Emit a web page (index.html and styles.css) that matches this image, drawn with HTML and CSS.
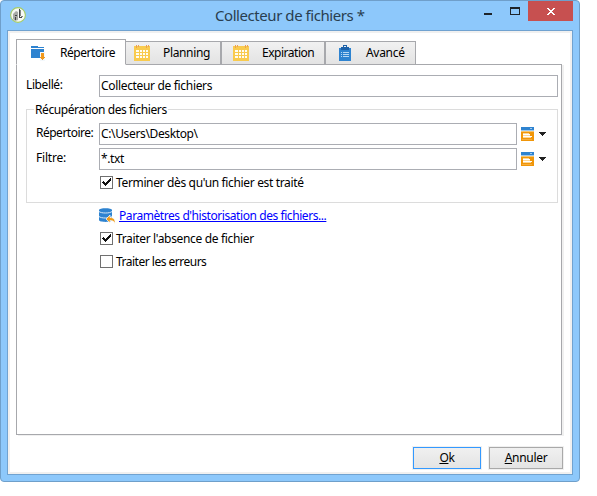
FILE: index.html
```html
<!DOCTYPE html>
<html lang="fr">
<head>
<meta charset="utf-8">
<title>Collecteur de fichiers</title>
<link rel="stylesheet" href="styles.css">
</head>
<body>
<svg class="defs" width="0" height="0" aria-hidden="true">
  <symbol id="calendar" viewBox="0 0 16 16">
    <path fill="#f9cb4e" d="M0 1h16v15H0z"/>
    <path fill="#eda050" d="M2 0h1v3H2zM4 0h1v2H4zM12 0h1v3h-1zM14 0h1v2h-1z"/>
    <path fill="#fffdf2" d="M2 5h3v2H2zM6 5h2v2H6zM9 5h2v2H9zM12 5h2v2h-2zM2 8h3v2H2zM6 8h2v2H6zM9 8h2v2H9zM12 8h2v2h-2zM2 11h3v2H2zM6 11h2v2H6zM9 11h2v2H9zM12 11h2v2h-2z"/>
  </symbol>
  <symbol id="browse" viewBox="0 0 13 14">
    <path fill="#2e83d0" d="M0 0h13v3H0z"/>
    <path fill="#9fc8ec" d="M9 1h2v1H9zM0 3h13v1H0z"/>
    <path fill="#f9c56c" d="M0 4h13v1H0z"/>
    <path fill="#f09609" d="M0 5h13v9H0z"/>
    <path fill="#fff" d="M2 7h7v1H2zM2 9h9v1H2z"/>
    <path fill="#ffd794" d="M2 6h6v1H2zM2 8h7v1H2zM2 10h8v1H2z"/>
    <path fill="#f6ad3c" d="M1 12h10v1H1z"/>
  </symbol>
  <symbol id="check" viewBox="0 0 13 13">
    <path fill="#111" d="M2 6h1V5h1v1h1v1h1V6h1V5h1V4h1V3h1V2h1v3h-1v1H9v1H8v1H7v1H6v1H5V9H4V8H3V7H2z"/>
  </symbol>
</svg>
<div class="window">
  <header class="titlebar">
    <svg class="app-icon" viewBox="0 0 16 16">
      <circle cx="8" cy="8" r="7.4" fill="#f7f9f5" stroke="#a5cc65" stroke-width="1.1"/>
      <path fill="#a8aaa6" d="M3 7l3-3 2 1v8l-3 1-2-2z"/>
      <path fill="#444" d="M5 8h2v1H5zM5 10h1v3H5zM9 2h1v9H9zM10 10h2v1h-2z"/>
      <path fill="#858883" d="M10 3h1v6h-1zM11 9h2v1h-2z"/>
    </svg>
    <h1 class="title"><span>Collecteur de fichiers *</span></h1>
    <div class="controls">
      <svg class="minimize" viewBox="0 0 8 2"><path fill="#1e242a" d="M0 0h8v2H0z"/></svg>
      <svg class="maximize" viewBox="0 0 10 8"><path fill="#1e242a" fill-rule="evenodd" d="M0 0h10v8H0zM1 2v5h8V2z"/></svg>
      <div class="close"><svg viewBox="0 0 8 7"><path fill="#fff" d="M0 0h2v1h1v1h2V1h1V0h2v1H7v1H6v1H5v1h1v1h1v1h1v1H6V6H5V5H3v1H2v1H0V6h1V5h1V4h1V3H2V2H1V1H0z"/></svg></div>
    </div>
  </header>
  <main class="client">
    <nav class="tabs">
      <div class="tab active t1">
        <svg width="14" height="15" viewBox="0 0 14 15"><path fill="#2e83d0" d="M0 0h7v1h6v1H0zM0 3h13v4H9v5H0z"/><path fill="#f3f8fc" d="M9 6h5v9H9z"/><path fill="#f0981c" d="M10 7h3v4h1v1h-1v1h-1v1h-1v-1h-1v-1H9v-1h1z"/></svg>
        <span>Répertoire</span>
      </div>
      <div class="tab t2"><svg width="16" height="16"><use href="#calendar"/></svg><span>Planning</span></div>
      <div class="tab t3"><svg width="16" height="16"><use href="#calendar"/></svg><span>Expiration</span></div>
      <div class="tab t4">
        <svg width="12" height="16" viewBox="0 0 12 16"><path fill="#2e83d0" d="M0 3h12v13H0z"/><path fill="#1d61a8" d="M4 0h4v2h2v3H2V2h2z"/><path fill="#e8f1fa" d="M5 1h2v1H5z"/><path fill="#b7d8f3" d="M2 7h1v1H2zM4 7h6v1H4zM2 9h1v1H2zM4 9h6v1H4zM2 11h1v1H2zM4 11h6v1H4z"/></svg>
        <span>Avancé</span>
      </div>
    </nav>
    <section class="panel">
      <div class="row label-row"><label><span class="w-lib">Libellé:</span></label><div class="input"><span class="w-col">Collecteur de fichiers</span></div></div>
      <fieldset class="group">
        <legend><span class="w-rec">Récupération des fichiers</span></legend>
        <div class="row"><label><span class="w-rep">Répertoire:</span></label><div class="input"><span class="w-path">C:\Users\Desktop\</span></div>
          <svg class="browse" width="13" height="14"><use href="#browse"/></svg><svg class="caret" width="7" height="4" viewBox="0 0 7 4"><path fill="#222" d="M0 0h7v1H6v1H5v1H4v1H3V3H2V2H1V1H0z"/></svg></div>
        <div class="row"><label><span class="w-fil">Filtre:</span></label><div class="input"><span class="w-txt">*.txt</span></div>
          <svg class="browse" width="13" height="14"><use href="#browse"/></svg><svg class="caret" width="7" height="4" viewBox="0 0 7 4"><path fill="#222" d="M0 0h7v1H6v1H5v1H4v1H3V3H2V2H1V1H0z"/></svg></div>
        <div class="option"><i class="box"><svg viewBox="0 0 13 13"><use href="#check"/></svg></i><span class="w-ter">Terminer dès qu'un fichier est traité</span></div>
      </fieldset>
      <div class="history">
        <svg width="17" height="16" viewBox="0 0 17 16"><path fill="#2e83d0" d="M0 2C0-.4 13-.4 13 2v10c0 2.500-13 2.500-13 0z"/><path fill="none" stroke="#d5e8f8" d="M0 3.500c2 2 11 2 13 0M0 8.500c2 2 11 2 13 0"/><path fill="#f09b18" stroke="#fff" stroke-width=".7" d="M7 11l4-4v2.500c4 0 5.500 2.500 5 6-1-2-2-3-5-3V15z"/></svg>
        <a class="w-his">Paramètres d'historisation des fichiers...</a>
      </div>
      <div class="option"><i class="box"><svg viewBox="0 0 13 13"><use href="#check"/></svg></i><span class="w-abs">Traiter l'absence de fichier</span></div>
      <div class="option"><i class="box"></i><span class="w-err">Traiter les erreurs</span></div>
    </section>
    <footer class="actions">
      <div class="button primary"><span><u>O</u>k</span></div>
      <div class="button"><span><u>A</u>nnuler</span></div>
    </footer>
  </main>
</div>
</body>
</html>
```
FILE: styles.css
```css
* { box-sizing: border-box; }
body { margin: 0; background: #fff; font: 12px/16px "Noto Sans", "Open Sans", sans-serif; color: #000; overflow: hidden; }
svg { display: block; flex: none; }
span, a { white-space: nowrap; }
.defs { position: absolute; }
.window { width: 580px; height: 482px; border: 1px solid #6f9fca; border-radius: 4px; background: #8dc8fb; padding: 0 6px 6px; }
.titlebar { height: 29px; display: flex; align-items: flex-start; }
.app-icon { width: 16px; height: 16px; margin: 6px 0 0 3px; }
.title { margin: 4px 0 0 189px; font-size: 15px; line-height: 20px; font-weight: 400; color: #293e50; flex: 1; letter-spacing: -.44px; }
.controls { display: flex; }
.minimize { width: 8px; height: 2px; margin: 12px 18px 0 0; }
.maximize { width: 10px; height: 8px; margin: 6px 8px 0 0; }
.close { width: 45px; height: 20px; background: #c75050; display: flex; align-items: center; justify-content: center; }
.close svg { width: 8px; height: 7px; margin-top: 1px; }

.client { height: 445px; border: 1px solid #70a2d0; background: #fff; box-shadow: inset 0 0 0 2px #f0f0f0; padding: 8px 10px 0 8px; }
.tabs { display: flex; align-items: flex-end; height: 26px; position: relative; z-index: 1; }
.tab { height: 24px; border: 1px solid #a7a8ac; background: linear-gradient(#f1f1f1, #e3e3e3); display: flex; align-items: center; }
.tab.active { height: 26px; background: #fff; border-bottom-color: #fff; }
.t1 { width: 110px; padding-left: 14px; gap: 15px; letter-spacing: -.45px; }
.t1 svg { margin-top: 2px; }
.t1 span { margin-top: 2px; }
.t2 { width: 95px; border-left: 0; padding-left: 8px; gap: 13px; letter-spacing: -.35px; }
.t3 { width: 104px; padding-left: 11px; gap: 13px; letter-spacing: -.48px; }
.t4 { width: 91px; padding-left: 13px; gap: 15px; letter-spacing: -.3px; }
.panel { height: 371px; width: 546px; margin-top: -1px; border: 1px solid #a7a8ac; padding: 10px 3px 0 9px; box-shadow: 2px 1px 0 #f0f0f0; background: #fff; }
.row { display: flex; height: 22px; }
.row label { width: 73px; flex: none; line-height: 20px; }
.input { flex: 1; border: 1px solid #abadb3; line-height: 19px; padding-left: 1px; }
.group { margin: 5px 0 0; height: 101px; border: 1px solid #dcdcdc; padding: 0 0 0 9px; min-width: 0; }
.group legend { padding: 0 1px; margin-left: -2px; height: 15px; line-height: 16px; }
.group .row { margin: 6px 0 0; padding-right: 11px; }
.group .row + .row { margin-top: 3px; }
.group .row label { width: 63px; }
.browse { margin: 4px 0 0 4px; }
.caret { margin: 9px 0 0 5px; }
.option { display: flex; height: 13px; align-items: center; gap: 3px; margin: 10px 0 0 74px; }
.group .option { margin: 6px 0 0 64px; }
.box { width: 13px; height: 13px; border: 1px solid #707070; flex: none; }
.box svg { width: 13px; height: 13px; margin: -1px; }
.history { display: flex; align-items: center; height: 16px; gap: 3px; margin: 5px 0 0 73px; }
.history + .option { margin-top: 8px; }
.history a { color: #00f; text-decoration: underline; }
.actions { display: flex; justify-content: flex-end; gap: 8px; padding-top: 12px; margin-right: -1px; }
.button { width: 74px; height: 22px; border: 1px solid #a9a9a9; background: linear-gradient(#f0f0f0, #e4e4e4); box-shadow: 0 0 0 1px #f0f0f0; text-align: center; line-height: 20px; letter-spacing: -.3px; }
.button.primary { width: 68px; border-color: #3399ff; }

/* text tracking */
.w-lib { letter-spacing: -.4px; }
.w-col { letter-spacing: -.33px; }
.w-rec { letter-spacing: -.42px; }
.w-rep { letter-spacing: -.5px; }
.w-path { letter-spacing: -.36px; }
.w-fil { letter-spacing: -.2px; }
.w-txt { letter-spacing: -.4px; }
.w-ter { letter-spacing: -.35px; }
.w-his { letter-spacing: -.43px; }
.w-abs { letter-spacing: -.34px; }
.w-err { letter-spacing: -.5px; }
```
